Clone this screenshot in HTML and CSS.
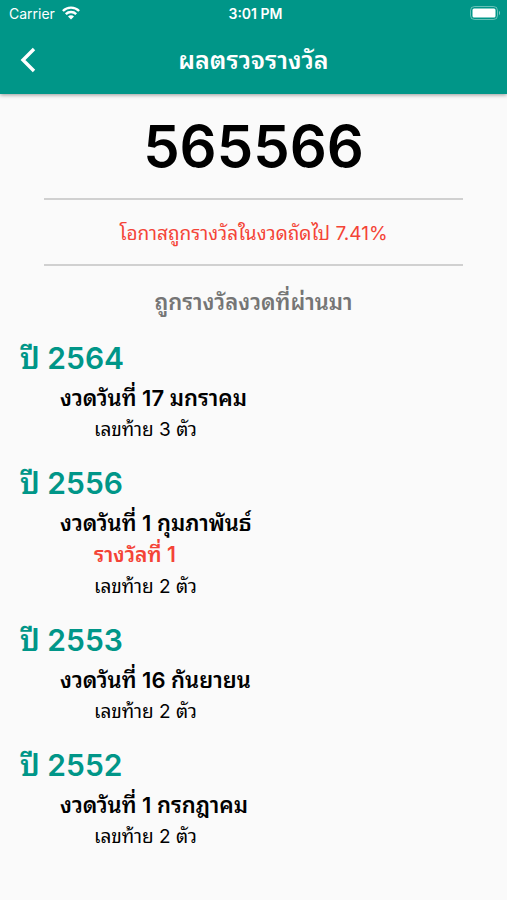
FILE: index.html
```
<!DOCTYPE html>
<html lang="th">
<head>
    <meta charset="UTF-8">
    <meta name="viewport" content="width=device-width, initial-scale=1.0">
    <title>ผลตรวจรางวัล</title>
    <link rel="stylesheet" href="styles.css">
</head>
<body>
    <header class="app-header">
        <div class="status-bar">
            <div class="carrier">
                <span>Carrier</span>
                <svg class="wifi" viewBox="0 0 18 14" width="18" height="14" aria-hidden="true">
                    <path d="M0.9 5a11.5 11.5 0 0 1 16.2 0M3.8 8.2a7.4 7.4 0 0 1 10.4 0" fill="none" stroke="#fff" stroke-width="2.4"/>
                    <path d="M9 13.5L6 10.6a4.2 4.2 0 0 1 6 0z" fill="#fff"/>
                </svg>
            </div>
            <span class="time">3:01 PM</span>
            <svg class="battery" viewBox="0 0 32 14" width="32" height="14" aria-hidden="true">
                <rect x="0.5" y="0.5" width="27" height="13" rx="4" fill="none" stroke="#fff" stroke-opacity="0.4"/>
                <rect x="2.5" y="2.5" width="23" height="9" rx="1.5" fill="#fff"/>
                <path d="M29 4.8a2.8 2.8 0 0 1 0 4.4z" fill="#fff" fill-opacity="0.5"/>
            </svg>
        </div>
        <div class="title-bar">
            <button class="back" type="button" aria-label="ย้อนกลับ">
                <svg viewBox="0 0 16 26" width="16" height="26" aria-hidden="true">
                    <path d="M14 2L3 13l11 11" fill="none" stroke="#fff" stroke-width="3.4"/>
                </svg>
            </button>
            <h1>ผลตรวจรางวัล</h1>
        </div>
    </header>
    <main>
        <div class="number">565566</div>
        <p class="chance">โอกาสถูกรางวัลในงวดถัดไป 7.41%</p>
        <h2>ถูกรางวัลงวดที่ผ่านมา</h2>
        <section class="year">
            <h3>ปี 2564</h3>
            <h4>งวดวันที่ 17 มกราคม</h4>
            <p>เลขท้าย 3 ตัว</p>
        </section>
        <section class="year">
            <h3>ปี 2556</h3>
            <h4>งวดวันที่ 1 กุมภาพันธ์</h4>
            <p class="first-prize">รางวัลที่ 1</p>
            <p>เลขท้าย 2 ตัว</p>
        </section>
        <section class="year">
            <h3>ปี 2553</h3>
            <h4>งวดวันที่ 16 กันยายน</h4>
            <p>เลขท้าย 2 ตัว</p>
        </section>
        <section class="year">
            <h3>ปี 2552</h3>
            <h4>งวดวันที่ 1 กรกฎาคม</h4>
            <p>เลขท้าย 2 ตัว</p>
        </section>
    </main>
</body>
</html>
```
FILE: styles.css
```
* {
    box-sizing: border-box;
    margin: 0;
    padding: 0;
}
body {
    font-family: Inter, "Noto Sans Thai Looped", "Noto Sans Thai", "Noto Sans", sans-serif;
    background-color: #fafafa;
    color: #000;
}
.app-header {
    background-color: #009688;
    color: #fff;
    box-shadow: 0 1px 4px rgba(0, 0, 0, 0.4);
}
.status-bar {
    display: grid;
    grid-template-columns: 1fr auto 1fr;
    align-items: center;
    height: 26px;
    padding: 0 5px 0 9px;
    font-size: 14px;
}
.carrier {
    display: flex;
    align-items: center;
    gap: 7px;
}
.time {
    font-weight: 600;
}
.battery {
    justify-self: end;
}
.title-bar {
    display: grid;
    grid-template-columns: 56px 1fr 56px;
    align-items: center;
    height: 68px;
}
.back {
    display: flex;
    align-items: center;
    justify-content: center;
    height: 56px;
    background: none;
    border: none;
    cursor: pointer;
}
h1 {
    font-size: 25px;
    line-height: 40px;
    font-weight: 600;
    text-align: center;
}
.number {
    padding: 16px 0;
    font-size: 58px;
    line-height: 72px;
    font-weight: 600;
    text-align: center;
}
.chance {
    margin: 0 44px;
    padding-top: 4px;
    border-top: 2px solid #d0d0d0;
    border-bottom: 2px solid #d0d0d0;
    font-size: 19px;
    line-height: 60px;
    text-align: center;
    color: #f44336;
}
h2 {
    padding: 16px 0;
    font-size: 22px;
    line-height: 40px;
    font-weight: 600;
    text-align: center;
    color: #757575;
}
.year {
    padding: 0 20px 17px;
}
.year h3 {
    font-size: 30px;
    line-height: 40px;
    margin-bottom: 4px;
    font-weight: 600;
    color: #009688;
}
.year h4 {
    padding-left: 40px;
    font-size: 22px;
    line-height: 32px;
    font-weight: 600;
}
.year p {
    padding-left: 74px;
    font-size: 19px;
    line-height: 32px;
}
.year .first-prize {
    font-size: 21px;
    font-weight: 600;
    color: #f44336;
}
```
